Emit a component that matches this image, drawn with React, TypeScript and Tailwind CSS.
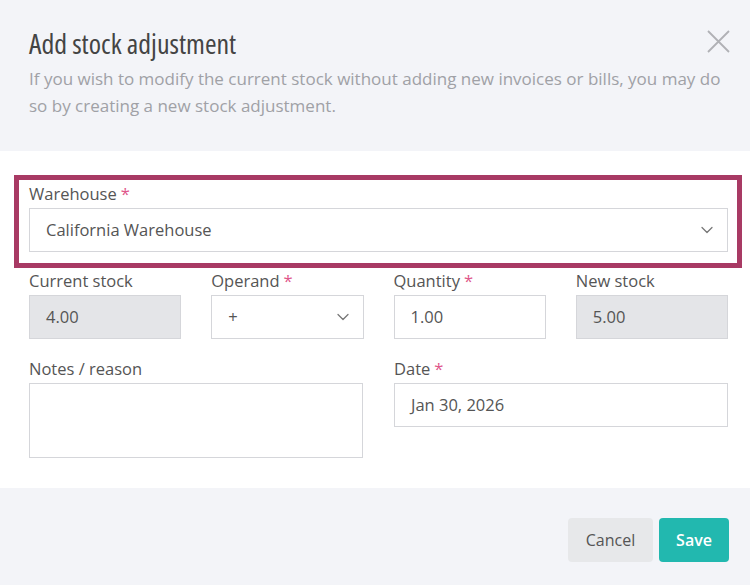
import { ChevronDown } from 'lucide-react';

const bodyFont = { fontFamily: '"Open Sans", "Noto Sans", sans-serif' };
const titleFont = { fontFamily: '"Open Sans", "Roboto Condensed", sans-serif', fontStretch: '75%' };

function Label({ text, required }: { text: string; required?: boolean }) {
  return (
    <div className="text-[16.5px] leading-[21px] text-[#555] mb-[4px]">
      {text}
      {required && <span className="text-[#e0568a] ml-1">*</span>}
    </div>
  );
}

function Field({ value, muted, chevron }: { value?: string; muted?: boolean; chevron?: boolean }) {
  return (
    <div
      className={`h-[44px] border border-[#d5d6da] flex items-center justify-between pl-4 pr-[10px] text-[16.5px] text-[#555] ${muted ? 'bg-[#e4e5e8]' : 'bg-white'}`}
    >
      <span>{value}</span>
      {chevron && <ChevronDown className="w-5 h-5 text-[#777]" strokeWidth={1.5} />}
    </div>
  );
}

export default function App() {
  return (
    <div className="w-[750px] h-[585px] bg-white flex flex-col" style={bodyFont}>
      {/* Header */}
      <div className="bg-[#f3f4f8] h-[151px] pl-[29px] pr-[24px] pt-[25px] relative">
        <h2 className="text-[28px] leading-[36px] text-[#444] font-normal" style={titleFont}>
          Add stock adjustment
        </h2>
        <p className="mt-[4px] text-[17px] leading-[27px] text-[#a0a1a6]">
          If you wish to modify the current stock without adding new invoices or bills, you may do so by creating a new stock adjustment.
        </p>
        <button className="absolute right-[20px] top-[30px]">
          <svg width="23" height="23" viewBox="0 0 23 23" fill="none" stroke="#b0b1b5" strokeWidth="1.8">
            <path d="M1 1 L22 22 M22 1 L1 22" />
          </svg>
        </button>
      </div>

      {/* Body */}
      <div className="flex-1 bg-white pt-[24px]">
        <div className="ml-[14px] mr-[8px] border-[5px] border-[#a83a64] pl-[10px] pr-[9px] pt-[3px] pb-[11px]">
          <Label text="Warehouse" required />
          <Field value="California Warehouse" chevron />
        </div>
        <div className="pl-[29px] pr-[22px] pt-[2px]">
          <div className="grid grid-cols-4 gap-x-[30px]">
            <div>
              <Label text="Current stock" />
              <Field value="4.00" muted />
            </div>
            <div>
              <Label text="Operand" required />
              <Field value="+" chevron />
            </div>
            <div>
              <Label text="Quantity" required />
              <Field value="1.00" />
            </div>
            <div>
              <Label text="New stock" />
              <Field value="5.00" muted />
            </div>
          </div>
          <div className="grid grid-cols-2 gap-x-[31px] mt-[19px]">
            <div>
              <Label text="Notes / reason" />
              <div className="h-[75px] border border-[#d5d6da] bg-white" />
            </div>
            <div>
              <Label text="Date" required />
              <Field value="Jan 30, 2026" />
            </div>
          </div>
        </div>
      </div>

      {/* Footer */}
      <div className="bg-[#f3f4f8] h-[97px] flex items-start justify-end gap-[6px] pt-[30px] pr-[21px]">
        <button className="h-[44px] w-[85px] rounded-[4px] bg-[#e7e8ea] text-[#555] text-[16px]">Cancel</button>
        <button className="h-[44px] w-[70px] rounded-[4px] bg-[#22b8af] text-white text-[16px] font-semibold">Save</button>
      </div>
    </div>
  );
}
